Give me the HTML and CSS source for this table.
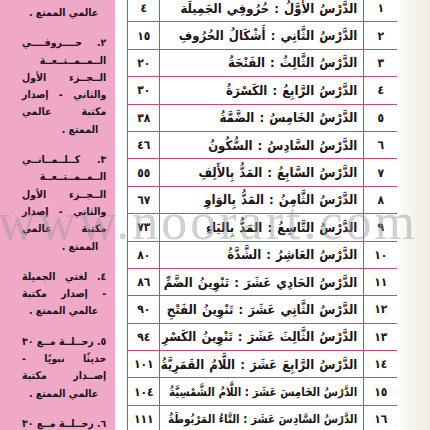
FILE: index.html
```html
<!DOCTYPE html>
<html lang="ar">
<head>
<meta charset="utf-8">
<link rel="stylesheet" href="styles.css">
</head>
<body>
<div class="page">
  <aside class="side">
    <div class="para">
      <span class="ln last">عالمي الممتع .</span>
    </div>
    <div class="para">
      <span class="ln">٢. حــــروفــــي</span>
      <span class="ln">الــمــمــتــعــة</span>
      <span class="ln">الــجــزء الأول</span>
      <span class="ln">والثاني - إصدار</span>
      <span class="ln">مكتبة عالمي</span>
      <span class="ln last">الممتع .</span>
    </div>
    <div class="para">
      <span class="ln">٣. كــلــمــاتــي</span>
      <span class="ln">الــمــمــتــعــة</span>
      <span class="ln">الــجــزء الأول</span>
      <span class="ln">والثاني - إصدار</span>
      <span class="ln">مكتبة عالمي</span>
      <span class="ln last">الممتع .</span>
    </div>
    <div class="para">
      <span class="ln">٤. لغتي الجميلة</span>
      <span class="ln">- إصدار مكتبة</span>
      <span class="ln last">عالمي الممتع .</span>
    </div>
    <div class="para">
      <span class="ln">٥. رحــلــة مــع ٣٠</span>
      <span class="ln">حديثًا نبويًا -</span>
      <span class="ln">إصــدار مكتبة</span>
      <span class="ln last">عالمي الممتع .</span>
    </div>
    <div class="para">
      <span class="ln">٦. رحــلــة مــع ٣٠</span>
    </div>
  </aside>
  <div class="gap"></div>
  <div class="tocwrap">
    <table class="toc">
      <colgroup><col class="c-num"><col class="c-title"><col class="c-pg"></colgroup>
      <tbody>
        <tr><td class="num">١</td><td class="title">الدَّرْسُ الأَوَّلُ : حُرُوفِي الجَمِيلَة</td><td class="pg">٤</td></tr>
        <tr><td class="num">٢</td><td class="title">الدَّرْسُ الثَّانِي : أَشْكَالُ الحُرُوفِ</td><td class="pg">١٥</td></tr>
        <tr><td class="num">٣</td><td class="title">الدَّرْسُ الثَّالِثُ : الفَتْحَةُ</td><td class="pg">٢٠</td></tr>
        <tr><td class="num">٤</td><td class="title">الدَّرْسُ الرَّابِعُ : الكَسْرَةُ</td><td class="pg">٣٠</td></tr>
        <tr><td class="num">٥</td><td class="title">الدَّرْسُ الخَامِسُ : الضَّمَّةُ</td><td class="pg">٣٨</td></tr>
        <tr><td class="num">٦</td><td class="title">الدَّرْسُ السَّادِسُ : السُّكُونُ</td><td class="pg">٤٦</td></tr>
        <tr><td class="num">٧</td><td class="title">الدَّرْسُ السَّابِعُ : المَدُّ بِالأَلِفِ</td><td class="pg">٥٥</td></tr>
        <tr><td class="num">٨</td><td class="title">الدَّرْسُ الثَّامِنُ : المَدُّ بِالوَاوِ</td><td class="pg">٦٧</td></tr>
        <tr><td class="num">٩</td><td class="title">الدَّرْسُ التَّاسِعُ : المَدُّ بِاليَاءِ</td><td class="pg">٧٣</td></tr>
        <tr><td class="num">١٠</td><td class="title">الدَّرْسُ العَاشِرُ : الشَّدَّةُ</td><td class="pg">٨٠</td></tr>
        <tr><td class="num">١١</td><td class="title">الدَّرْسُ الحَادِي عَشَرَ : تَنْوِينُ الضَّمِّ</td><td class="pg">٨٦</td></tr>
        <tr><td class="num">١٢</td><td class="title">الدَّرْسُ الثَّانِي عَشَرَ : تَنْوِينُ الفَتْحِ</td><td class="pg">٩٠</td></tr>
        <tr><td class="num">١٣</td><td class="title">الدَّرْسُ الثَّالِثَ عَشَرَ : تَنْوِينُ الكَسْرِ</td><td class="pg">٩٤</td></tr>
        <tr><td class="num">١٤</td><td class="title">الدَّرْسُ الرَّابِعَ عَشَرَ : اللَّامُ القَمَرِيَّةُ</td><td class="pg">١٠١</td></tr>
        <tr><td class="num">١٥</td><td class="title tight">الدَّرْسُ الخَامِسَ عَشَرَ : اللَّامُ الشَّمْسِيَّةُ</td><td class="pg">١٠٤</td></tr>
        <tr><td class="num">١٦</td><td class="title tight">الدَّرْسُ السَّادِسَ عَشَرَ : التَّاءُ المَرْبُوطَةُ</td><td class="pg">١١١</td></tr>
      </tbody>
    </table>
  </div>
  <div class="edge"></div>
  <div class="watermark">www.noorart.com</div>
</div>
</body>
</html>
```
FILE: styles.css
```css
html, body {
  margin: 0;
  padding: 0;
  background: #ffffff;
}
.page {
  position: relative;
  display: flex;
  width: 430px;
  height: 430px;
  overflow: hidden;
  font-family: "DejaVu Sans Condensed", "DejaVu Sans", sans-serif;
  font-stretch: condensed;
  font-weight: bold;
  color: #1c1416;
}
.side {
  flex: 0 0 106px;
  box-sizing: border-box;
  background: #f0a8c7;
  padding: 4px 9px 0 22px;
  direction: rtl;
  font-size: 10.5px;
  line-height: 17.3px;
}
.para {
  margin-bottom: 13px;
}
.ln {
  display: block;
  white-space: nowrap;
  text-align: justify;
  text-align-last: justify;
}
.ln.last {
  text-align: right;
  text-align-last: right;
  padding-right: 8px;
}
.gap {
  flex: 0 0 12px;
}
.tocwrap {
  flex: 0 0 270px;
  width: 270px;
  margin-top: -6px;
  overflow: hidden;
}
.toc {
  width: 270px;
  direction: rtl;
  border-collapse: collapse;
  table-layout: fixed;
  background: #ffffff;
}
.c-num { width: 34px; }
.c-title { width: 204px; }
.c-pg { width: 32px; }
.toc td {
  height: 27.4px;
  padding: 0;
  border: 1.5px solid #cf4676;
  font-size: 13px;
  white-space: nowrap;
  overflow: hidden;
  box-sizing: border-box;
}
.toc .num {
  text-align: center;
  font-size: 12px;
}
.toc .title {
  text-align: right;
  padding-right: 6px;
  word-spacing: 1px;
}
.toc .title.tight {
  font-size: 11.5px;
  word-spacing: 0;
}
.toc .pg {
  text-align: center;
  font-size: 12px;
}
.edge {
  flex: 1;
  background: linear-gradient(to right, #ffffff 0%, #f8f6f1 35%, #efebe3 100%);
}
.watermark {
  position: absolute;
  left: -2px;
  top: 192px;
  font-family: "Liberation Serif", serif;
  font-weight: normal;
  font-stretch: normal;
  font-size: 52px;
  letter-spacing: 3px;
  color: rgba(150, 150, 150, 0.45);
  white-space: nowrap;
  pointer-events: none;
}
```
